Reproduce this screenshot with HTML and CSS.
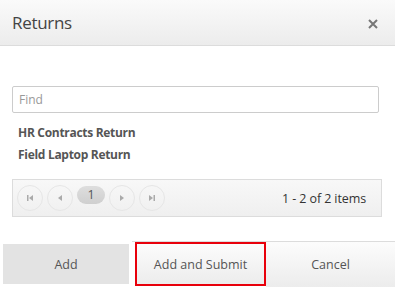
FILE: index.html
```html
<!DOCTYPE html>
<html>
<head>
<meta charset="utf-8">
<link rel="stylesheet" href="styles.css">
</head>
<body>
<div class="dialog">
  <div class="header">
    <span class="title">Returns</span>
    <svg class="close" width="10" height="10" viewBox="0 0 10 10"><path d="M1 1L9 9M9 1L1 9" stroke="#777" stroke-width="2" fill="none"/></svg>
  </div>
  <div class="content">
    <div class="find">Find</div>
    <ul class="list">
      <li>HR Contracts Return</li>
      <li>Field Laptop Return</li>
    </ul>
    <div class="pager">
      <div class="nav">
        <span class="circle"><svg width="8" height="8" viewBox="0 0 8 8"><rect x="1" y="1" width="1.5" height="6" fill="#aaa"/><path d="M7 1L3 4L7 7Z" fill="#aaa"/></svg></span>
        <span class="circle"><svg width="8" height="8" viewBox="0 0 8 8"><path d="M6 1L2 4L6 7Z" fill="#aaa"/></svg></span>
        <span class="page">1</span>
        <span class="circle"><svg width="8" height="8" viewBox="0 0 8 8"><path d="M2 1L6 4L2 7Z" fill="#aaa"/></svg></span>
        <span class="circle"><svg width="8" height="8" viewBox="0 0 8 8"><path d="M1 1L5 4L1 7Z" fill="#aaa"/><rect x="5.5" y="1" width="1.5" height="6" fill="#aaa"/></svg></span>
      </div>
      <span class="info">1 - 2 of 2 items</span>
    </div>
  </div>
  <div class="footer">
    <div class="btn add">Add</div>
    <div class="group">
      <div class="btn submit">Add and Submit</div>
      <div class="btn cancel">Cancel</div>
    </div>
  </div>
</div>
</body>
</html>
```
FILE: styles.css
```css
html, body {
  margin: 0;
  padding: 0;
  background: #fff;
}
body {
  font-family: "Open Sans", "Noto Sans", sans-serif;
  color: #444;
  width: 395px;
  height: 287px;
  overflow: hidden;
}
.header {
  height: 45px;
  border-bottom: 1px solid #dcdcdc;
  background: linear-gradient(#fafafa, #ececec);
  display: flex;
  align-items: center;
  justify-content: space-between;
  padding: 0 17px 0 12px;
}
.title {
  font-size: 17px;
  color: #444;
  letter-spacing: -0.3px;
  margin-top: 0px;
}
.close {
  margin-top: 2px;
}
.content {
  padding: 40px 16px 0 12px;
}
.find {
  height: 25px;
  border: 1px solid #ccc;
  border-radius: 2px;
  box-sizing: content-box;
  font-size: 12px;
  line-height: 25px;
  color: #999;
  padding-left: 6px;
}
.list {
  list-style: none;
  margin: 9px 0 0 0;
  padding: 0 0 0 6px;
}
.list li {
  font-size: 12px;
  font-weight: bold;
  color: #555;
  line-height: 22px;
  letter-spacing: -0.3px;
}
.pager {
  margin-top: 13px;
  height: 38px;
  width: 370px;
  box-sizing: border-box;
  border: 1px solid #dcdcdc;
  background: linear-gradient(#f8f8f8, #efefef);
  display: flex;
  align-items: center;
  justify-content: space-between;
  padding: 0 15px 0 4px;
}
.nav {
  display: flex;
  align-items: center;
  gap: 4px;
}
.circle {
  width: 24px;
  height: 24px;
  border: 1px solid #e6e6e6;
  border-radius: 50%;
  display: flex;
  align-items: center;
  justify-content: center;
}
.page {
  width: 28px;
  height: 18px;
  border-radius: 9px;
  background: linear-gradient(#dedede, #cfcfcf);
  font-size: 12.5px;
  line-height: 17px;
  text-align: center;
  color: #555;
  margin-top: -7px;
}
.info {
  font-size: 12.5px;
  color: #333;
  letter-spacing: -0.1px;
}
.footer {
  margin-top: 24px;
  display: flex;
  height: 46px;
}
.btn {
  display: flex;
  align-items: center;
  justify-content: center;
  font-size: 12.5px;
  color: #555;
  box-sizing: border-box;
}
.add {
  width: 126px;
  margin: 3px;
  height: 40px;
  background: #e3e3e3;
}
.group {
  flex: 1;
  display: flex;
  border-top: 1px solid #dcdcdc;
}
.submit {
  margin-left: 3px;
  width: 131px;
  height: 44px;
  border: 2px solid #e8000b;
  background: linear-gradient(#fcfcfc, #ececec);
}
.cancel {
  flex: 1;
  height: 45px;
  background: linear-gradient(#fcfcfc, #ececec);
}
```
